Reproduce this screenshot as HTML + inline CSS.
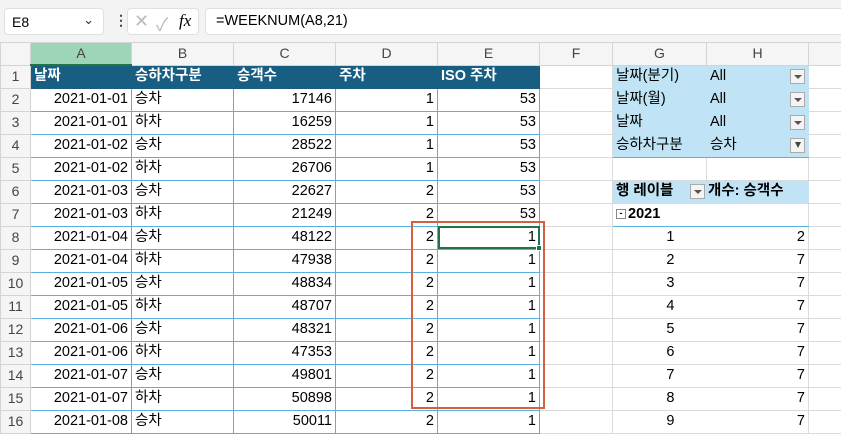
<!DOCTYPE html>
<html><head><meta charset="utf-8"><style>
*{box-sizing:border-box;margin:0;padding:0}
body{width:841px;height:419px;overflow:hidden;background:#fff;font-family:"Liberation Sans","Noto Sans CJK KR",sans-serif;font-size:14.5px;color:#000;position:relative}
.bar{position:absolute;left:0;top:0;width:841px;height:42px;background:#f3f3f3}
.nb{position:absolute;left:4px;top:8px;width:100px;height:27px;background:#fff;border:1px solid #e0e0e0;border-radius:4px;font-size:14px;padding:5px 0 0 7px}
.fx{position:absolute;left:127px;top:8px;width:72px;height:27px;background:#fff;border:1px solid #e0e0e0;border-radius:4px}
.fb{position:absolute;left:205px;top:8px;width:640px;height:27px;background:#fff;border:1px solid #e0e0e0;border-radius:4px;font-size:14.5px;padding:4px 0 0 10px}
table{position:absolute;left:0;top:42px;border-collapse:collapse;table-layout:fixed;width:848px}
td{height:23px;border:1px solid #dadada;padding:0 3px;white-space:nowrap;overflow:hidden;line-height:21px}
tr.h td{height:22px;background:#f5f5f5;text-align:center;color:#444;font-size:14px;border-color:#d4d4d4}
td.rn{background:#f5f5f5;text-align:center;color:#444;font-size:14px;border-color:#d4d4d4}
td.r{text-align:right}
td.t{border-color:#5aafe0}
tr.th td.t{background:#185d82;color:#fff;font-weight:bold;border-color:#185d82}
td.pb{background:#c0e4f5;border-color:#c0e4f5}
.dd{display:inline-block;width:15px;height:15px;border:1px solid #aaa;background:#f4f4f4;vertical-align:middle;position:relative;float:right;margin-top:3px}
.dd:after{content:"";position:absolute;left:3px;top:5px;border-left:4px solid transparent;border-right:4px solid transparent;border-top:4px solid #555}
.dd.f:after{left:4px;top:3px;border-left:3px solid transparent;border-right:3px solid transparent;border-top:6px solid #444}
</style></head><body>
<div class="bar">
<div class="nb">E8<span style="position:absolute;right:9px;top:3px;font-size:13px;color:#333">&#8964;</span></div>
<div style="position:absolute;left:114px;top:12px;font-size:14px;color:#444;font-weight:bold">&#8942;</div>
<div class="fx"><span style="position:absolute;left:6px;top:2px;color:#bbb;font-size:18px">&#10005;</span><span style="position:absolute;left:28px;top:2px;color:#bbb;font-size:18px">&#10003;</span><span style="position:absolute;left:51px;top:2px;font-family:'Liberation Serif',serif;font-style:italic;font-size:17px">fx</span></div>
<div class="fb">=WEEKNUM(A8,21)</div>
</div>
<table>
<colgroup><col style="width:30px"><col style="width:101px"><col style="width:102px"><col style="width:102px"><col style="width:102px"><col style="width:102px"><col style="width:73px"><col style="width:94px"><col style="width:102px"><col style="width:40px"></colgroup>
<tr class="h"><td></td><td style="background:#9fd5b7;border-bottom:2px solid #217346">A</td><td>B</td><td>C</td><td>D</td><td>E</td><td>F</td><td>G</td><td>H</td><td></td></tr>
<tr class="th"><td class="rn">1</td><td class="t">날짜</td><td class="t">승하차구분</td><td class="t">승객수</td><td class="t">주차</td><td class="t">ISO 주차</td><td></td><td class="pb">날짜(분기)</td><td class="pb">All<span class="dd"></span></td><td></td></tr>
<tr><td class="rn">2</td><td class="t r">2021-01-01</td><td class="t">승차</td><td class="t r">17146</td><td class="t r">1</td><td class="t r">53</td><td></td><td class="pb">날짜(월)</td><td class="pb">All<span class="dd"></span></td><td></td></tr>
<tr><td class="rn">3</td><td class="t r">2021-01-01</td><td class="t">하차</td><td class="t r">16259</td><td class="t r">1</td><td class="t r">53</td><td></td><td class="pb">날짜</td><td class="pb">All<span class="dd"></span></td><td></td></tr>
<tr><td class="rn">4</td><td class="t r">2021-01-02</td><td class="t">승차</td><td class="t r">28522</td><td class="t r">1</td><td class="t r">53</td><td></td><td class="pb" style="border-bottom:1px solid #5aafe0">승하차구분</td><td class="pb" style="border-bottom:1px solid #5aafe0">승차<span class="dd f"></span></td><td></td></tr>
<tr><td class="rn">5</td><td class="t r">2021-01-02</td><td class="t">하차</td><td class="t r">26706</td><td class="t r">1</td><td class="t r">53</td><td></td><td></td><td></td><td></td></tr>
<tr><td class="rn">6</td><td class="t r">2021-01-03</td><td class="t">승차</td><td class="t r">22627</td><td class="t r">2</td><td class="t r">53</td><td></td><td class="pb" style="font-weight:bold">행 레이블<span class="dd" style="margin-right:-2px"></span></td><td class="pb" style="font-weight:bold;padding-left:1px">개수: 승객수</td><td></td></tr>
<tr><td class="rn">7</td><td class="t r">2021-01-03</td><td class="t">하차</td><td class="t r">21249</td><td class="t r">2</td><td class="t r">53</td><td></td><td style="font-weight:bold;border-top:1px solid #5aafe0;border-bottom:1px solid #5aafe0;border-right:none"><span style="display:inline-block;width:10px;height:10px;border:1px solid #888;font-size:9px;line-height:7px;text-align:center;vertical-align:middle;margin-right:2px">-</span>2021</td><td style="border-top:1px solid #5aafe0;border-bottom:1px solid #5aafe0;border-left:none"></td><td></td></tr>
<tr><td class="rn">8</td><td class="t r">2021-01-04</td><td class="t">승차</td><td class="t r">48122</td><td class="t r">2</td><td class="t r" style="outline:2px solid #217346;outline-offset:-2px">1</td><td></td><td class="r" style="border-right:none;padding-right:32px">1</td><td class="r" style="border-left:none">2</td><td></td></tr>
<tr><td class="rn">9</td><td class="t r">2021-01-04</td><td class="t">하차</td><td class="t r">47938</td><td class="t r">2</td><td class="t r">1</td><td></td><td class="r" style="border-right:none;padding-right:32px">2</td><td class="r" style="border-left:none">7</td><td></td></tr>
<tr><td class="rn">10</td><td class="t r">2021-01-05</td><td class="t">승차</td><td class="t r">48834</td><td class="t r">2</td><td class="t r">1</td><td></td><td class="r" style="border-right:none;padding-right:32px">3</td><td class="r" style="border-left:none">7</td><td></td></tr>
<tr><td class="rn">11</td><td class="t r">2021-01-05</td><td class="t">하차</td><td class="t r">48707</td><td class="t r">2</td><td class="t r">1</td><td></td><td class="r" style="border-right:none;padding-right:32px">4</td><td class="r" style="border-left:none">7</td><td></td></tr>
<tr><td class="rn">12</td><td class="t r">2021-01-06</td><td class="t">승차</td><td class="t r">48321</td><td class="t r">2</td><td class="t r">1</td><td></td><td class="r" style="border-right:none;padding-right:32px">5</td><td class="r" style="border-left:none">7</td><td></td></tr>
<tr><td class="rn">13</td><td class="t r">2021-01-06</td><td class="t">하차</td><td class="t r">47353</td><td class="t r">2</td><td class="t r">1</td><td></td><td class="r" style="border-right:none;padding-right:32px">6</td><td class="r" style="border-left:none">7</td><td></td></tr>
<tr><td class="rn">14</td><td class="t r">2021-01-07</td><td class="t">승차</td><td class="t r">49801</td><td class="t r">2</td><td class="t r">1</td><td></td><td class="r" style="border-right:none;padding-right:32px">7</td><td class="r" style="border-left:none">7</td><td></td></tr>
<tr><td class="rn">15</td><td class="t r">2021-01-07</td><td class="t">하차</td><td class="t r">50898</td><td class="t r">2</td><td class="t r">1</td><td></td><td class="r" style="border-right:none;padding-right:32px">8</td><td class="r" style="border-left:none">7</td><td></td></tr>
<tr><td class="rn">16</td><td class="t r">2021-01-08</td><td class="t">승차</td><td class="t r">50011</td><td class="t r">2</td><td class="t r">1</td><td></td><td class="r" style="border-right:none;padding-right:32px">9</td><td class="r" style="border-left:none">7</td><td></td></tr>
</table>
<div style="position:absolute;left:536px;top:245px;width:6px;height:6px;background:#217346;border:1px solid #fff"></div>
<div style="position:absolute;left:411px;top:221px;width:134px;height:188px;border:2px solid #d4603e"></div>
</body></html>
